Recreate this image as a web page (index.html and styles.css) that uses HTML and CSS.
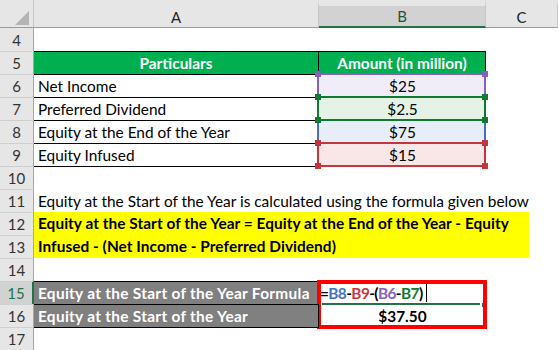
FILE: index.html
```html
<!DOCTYPE html>
<html>
<head>
<meta charset="utf-8">
<link rel="stylesheet" href="styles.css">
</head>
<body>
<div class="sheet">
  <div class="corner"><svg width="33" height="27" viewBox="0 0 33 27"><polygon points="15,25 29,25 29,11" fill="#b4b4b4"/></svg></div>
  <div class="ch">A</div>
  <div class="ch sel">B</div>
  <div class="ch">C</div>

  <div class="rh first">4</div><div class="c"></div><div class="c"></div><div class="c"></div>

  <div class="rh">5</div>
  <div class="c hdr bt br">Particulars</div>
  <div class="c hdr bt br">Amount (in million)</div>
  <div class="c"></div>

  <div class="rh">6</div>
  <div class="c bt">Net Income</div>
  <div class="c val purple"><span class="rng"><i class="h tl"></i><i class="h tr"></i><i class="h bl"></i><i class="h brr"></i></span>$25</div>
  <div class="c"></div>

  <div class="rh">7</div>
  <div class="c bt">Preferred Dividend</div>
  <div class="c val green"><span class="rng"><i class="h tl"></i><i class="h tr"></i><i class="h bl"></i><i class="h brr"></i></span>$2.5</div>
  <div class="c"></div>

  <div class="rh">8</div>
  <div class="c bt">Equity at the End of the Year</div>
  <div class="c val blue"><span class="rng"></span>$75</div>
  <div class="c"></div>

  <div class="rh">9</div>
  <div class="c bt">Equity Infused</div>
  <div class="c val red"><span class="rng"><i class="h tl"></i><i class="h tr"></i><i class="h bl"></i><i class="h brr"></i></span>$15</div>
  <div class="c"></div>

  <div class="rh">10</div><div class="c bt"></div><div class="c"></div><div class="c"></div>

  <div class="rh">11</div>
  <div class="c span3">Equity at the Start of the Year is calculated using the formula given below</div>

  <div class="rh">12</div>
  <div class="merged"><div class="yellow">Equity at the Start of the Year = Equity at the End of the Year - Equity<br>Infused - (Net Income - Preferred Dividend)</div></div>
  <div class="rh">13</div>

  <div class="rh">14</div><div class="c"></div><div class="c"></div><div class="c"></div>

  <div class="rh active">15</div>
  <div class="c gray bt br">Equity at the Start of the Year Formula</div>
  <div class="result">
    <div class="frow">=<span class="rb">B8</span>-<span class="rr">B9</span>-(<span class="rp">B6</span>-<span class="rg">B7</span>)<span class="cursor"></span></div>
    <div class="vrow">$37.50</div>
    <span class="active-line"></span><span class="active-handle"></span>
    <span class="redbox"></span>
  </div>
  <div class="c"></div>

  <div class="rh">16</div>
  <div class="c gray bt br">Equity at the Start of the Year</div>
  <div class="c"></div>

  <div class="rh">17</div><div class="c bt"></div><div class="c"></div><div class="c"></div>
</div>
</body>
</html>
```

FILE: styles.css
```css
html, body {
  margin: 0;
  padding: 0;
  background: #fff;
}

.sheet {
  display: grid;
  grid-template-columns: 34px 285px 167px 1fr;
  grid-template-rows: 28px repeat(14, 23px);
  width: 558px;
  height: 350px;
  overflow: hidden;
  font-family: "Lato", "Liberation Sans", sans-serif;
  font-size: 15.4px;
  color: #000;
}

.corner {
  box-sizing: border-box;
  background: #e6e6e6;
  border-right: 1px solid #c8c8c8;
  border-bottom: 1px solid #9b9b9b;
}
.corner svg { display: block; }

.ch {
  box-sizing: border-box;
  background: #e6e6e6;
  border-top: 6px solid #e6e6e6;
  border-bottom: 1px solid #9b9b9b;
  border-right: 1px solid #c6c6c6;
  display: flex;
  align-items: center;
  justify-content: center;
  color: #222;
  font-size: 15px;
}
.ch.sel {
  background: #d2d2d2;
  border-bottom: 2px solid #217346;
  color: #1f5236;
}

.rh {
  box-sizing: border-box;
  background: #e6e6e6;
  border-right: 1px solid #a6a6a6;
  border-top: 1px solid #cfcfcf;
  display: flex;
  align-items: center;
  justify-content: center;
  color: #333;
  font-size: 15px;
}
.rh.first { border-top: none; }
.rh.active {
  background: #d2d2d2;
  color: #217346;
  border-right: 2px solid #217346;
}

.c {
  box-sizing: border-box;
  display: flex;
  align-items: center;
  padding: 0 4px;
  white-space: nowrap;
  position: relative;
}
.bt { border-top: 1px solid #000; }
.br { border-right: 1px solid #000; }

.hdr {
  background: #00b050;
  color: #fff;
  font-weight: bold;
  justify-content: center;
}

.val { justify-content: center; }
.purple { background: #f0edf8; --rc: #8562c2; z-index: 2; }
.green { background: #e5f2e6; --rc: #117a31; z-index: 3; }
.blue { background: #e8eef8; --rc: #4472c4; z-index: 1; }
.red { background: #f9e7e7; --rc: #c4363c; z-index: 4; }

.rng {
  position: absolute;
  left: -2px;
  right: 0;
  top: -1px;
  bottom: -1px;
  border: 2px solid var(--rc);
  pointer-events: none;
}
.h {
  position: absolute;
  width: 6px;
  height: 6px;
  background: var(--rc);
}
.h.tl { left: -4px; top: -4px; }
.h.tr { right: -4px; top: -4px; }
.h.bl { left: -4px; bottom: -4px; }
.h.brr { right: -4px; bottom: -4px; }

.span3 { grid-column: span 3; }

.merged {
  grid-column: span 3;
  grid-row: span 2;
}
.yellow {
  box-sizing: border-box;
  width: 495px;
  height: 46px;
  background: #ffff00;
  font-weight: bold;
  line-height: 23px;
  padding-left: 4px;
  white-space: nowrap;
  letter-spacing: 0.05px;
}

.gray {
  background: #808080;
  color: #fff;
  font-weight: bold;
  letter-spacing: 0.3px;
}

.result {
  grid-row: span 2;
  position: relative;
  display: grid;
  grid-template-rows: 23px 23px;
  font-weight: bold;
}
.frow {
  display: flex;
  align-items: center;
  padding-left: 1px;
  white-space: nowrap;
  letter-spacing: -0.6px;
}
.vrow {
  display: flex;
  align-items: center;
  justify-content: center;
}
.rb { color: #4472c4; }
.rr { color: #c4363c; }
.rp { color: #8562c2; }
.rg { color: #117a31; }
.cursor {
  display: inline-block;
  width: 1px;
  height: 19px;
  background: #000;
  margin-left: 3px;
}
.active-line {
  position: absolute;
  left: 3px;
  top: 22px;
  width: 158px;
  height: 2px;
  background: #217346;
}
.active-handle {
  position: absolute;
  left: 163px;
  top: 22px;
  width: 3px;
  height: 4px;
  background: #217346;
}
.redbox {
  position: absolute;
  left: -2px;
  right: -1px;
  top: -1px;
  bottom: -2px;
  border: 4px solid #ff0000;
  pointer-events: none;
}
```
